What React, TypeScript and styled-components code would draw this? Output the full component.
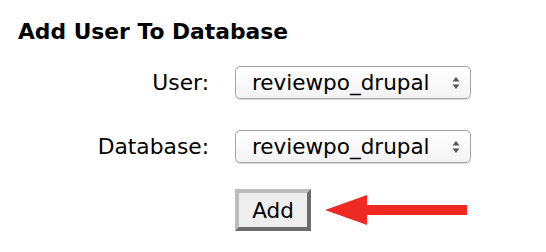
import React from 'react';
import styled, { createGlobalStyle } from 'styled-components';

const GlobalStyle = createGlobalStyle`
  html, body {
    margin: 0;
    background: #ffffff;
  }
  body {
    font-family: 'DejaVu Sans', Verdana, sans-serif;
    color: #000;
  }
`;

const Page = styled.div`
  width: 546px;
  height: 252px;
  padding: 20px 0 0 18px;
  box-sizing: border-box;
  overflow: hidden;
`;

const Title = styled.h2`
  margin: 0;
  font-size: 21.8px;
  font-weight: bold;
  line-height: 24px;
`;

const Form = styled.div`
  display: grid;
  grid-template-columns: 191px auto;
  column-gap: 26px;
  row-gap: 31px;
  align-items: center;
  margin-top: 22px;
`;

const Label = styled.label`
  font-size: 21.8px;
  text-align: right;
`;

const SelectBox = styled.div`
  width: 236px;
  height: 33px;
  box-sizing: border-box;
  display: flex;
  align-items: center;
  justify-content: space-between;
  padding: 0 10px 0 16px;
  border: 1px solid #a6a6a6;
  border-radius: 5px;
  background: linear-gradient(#ffffff, #f3f3f3);
  box-shadow: 0 1px 1px rgba(0, 0, 0, 0.15);
  font-size: 21.5px;
`;

const AddButton = styled.button`
  width: 76px;
  height: 42px;
  box-sizing: border-box;
  border: 4px solid;
  border-color: #bdbdbd #6b6b6b #6b6b6b #bdbdbd;
  background: #eeeeee;
  font-family: 'DejaVu Sans', Verdana, sans-serif;
  font-size: 21.5px;
  color: #000;
  padding: 0;
`;

const ButtonRow = styled.div`
  grid-column: 2;
  display: flex;
  align-items: center;
  gap: 14px;
  margin-top: -5px;
`;

const Arrows = () => (
  <svg width="8" height="14" viewBox="0 0 8 14">
    <path d="M4 1 L7.5 5.5 L0.5 5.5 Z" fill="#555" />
    <path d="M4 13 L7.5 8.5 L0.5 8.5 Z" fill="#555" />
  </svg>
);

const PointerArrow = () => (
  <svg width="144" height="32" viewBox="0 0 144 32">
    <path d="M0 16 L42 1 L42 11 L142 11 L142 21 L42 21 L42 31 Z" fill="#ee2a22" />
  </svg>
);

const Select = ({ value }: { value: string }) => (
  <SelectBox>
    <span>{value}</span>
    <Arrows />
  </SelectBox>
);

export default function App() {
  return (
    <>
      <GlobalStyle />
      <Page>
        <Title>Add User To Database</Title>
        <Form>
          <Label>User:</Label>
          <Select value="reviewpo_drupal" />
          <Label>Database:</Label>
          <Select value="reviewpo_drupal" />
          <ButtonRow>
            <AddButton>Add</AddButton>
            <PointerArrow />
          </ButtonRow>
        </Form>
      </Page>
    </>
  );
}
